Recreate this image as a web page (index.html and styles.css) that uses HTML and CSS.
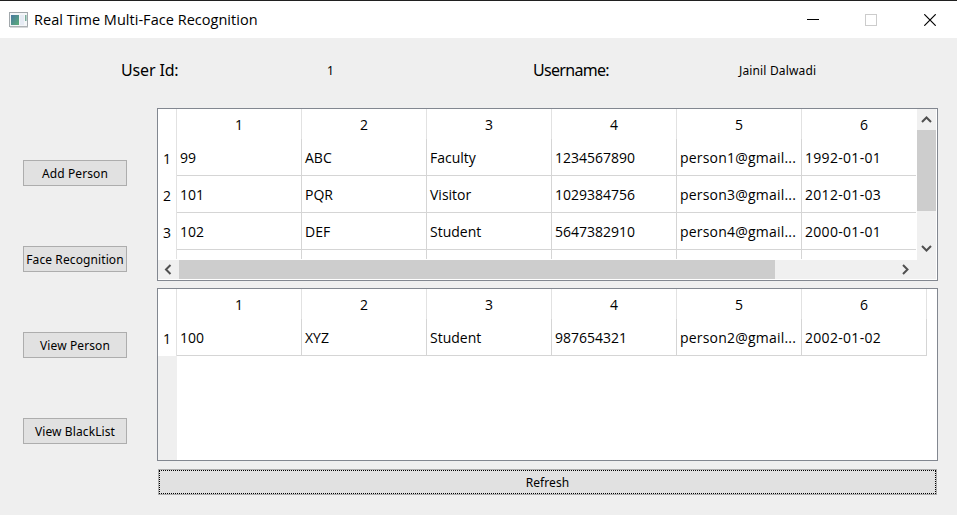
FILE: index.html
```html
<!DOCTYPE html>
<html lang="en">
<head>
<meta charset="utf-8">
<title>Real Time Multi-Face Recognition</title>
<link rel="stylesheet" href="styles.css">
</head>
<body>
<div class="window">
  <header class="titlebar">
    <svg class="app-icon" width="19" height="16" viewBox="0 0 19 16">
      <defs><linearGradient id="g" x1="0" y1="0" x2="1" y2="1"><stop offset="0" stop-color="#4878a0"/><stop offset="1" stop-color="#5cae78"/></linearGradient></defs>
      <rect x=".5" y=".5" width="18" height="14" fill="#f4f6f8" stroke="#a2a8ac"/>
      <rect x="1" y="14" width="18" height="1.5" fill="#aeb2b5"/>
      <rect x="2" y="3" width="8" height="10" fill="url(#g)"/>
      <rect x="11" y="3" width="4" height="10" fill="#e6ebf4"/>
      <rect x="16" y="3" width="1.5" height="6" fill="#79ad9b"/>
    </svg>
    <h1 class="title">Real Time Multi-Face Recognition</h1>
    <div class="controls">
      <svg width="12" height="12" viewBox="0 0 12 12"><path d="M0 5.5h12" stroke="#000"/></svg>
      <svg width="12" height="12" viewBox="0 0 12 12"><rect x=".5" y=".5" width="11" height="11" fill="none" stroke="#ccc"/></svg>
      <svg width="12" height="12" viewBox="0 0 12 12"><path d="M.3.3l11.4 11.4M11.7.3L.3 11.7" stroke="#000" stroke-width="1.2"/></svg>
    </div>
  </header>
  <div class="user">
    <span class="label id-label">User Id:</span>
    <span class="value id-value">1</span>
    <span class="label name-label">Username:</span>
    <span class="value name-value">Jainil Dalwadi</span>
  </div>
  <div class="body">
    <nav class="side">
      <button class="btn">Add Person</button>
      <button class="btn">Face Recognition</button>
      <button class="btn">View Person</button>
      <button class="btn">View BlackList</button>
    </nav>
    <main class="main">
      <section class="frame scrollable">
        <div class="view">
          <div class="grid">
            <div class="rh hd"></div><div class="hd">1</div><div class="hd">2</div><div class="hd">3</div><div class="hd">4</div><div class="hd">5</div><div class="hd">6</div>
            <div class="rh">1</div><div class="c">99</div><div class="c">ABC</div><div class="c">Faculty</div><div class="c">1234567890</div><div class="c mail">person1@gmail...</div><div class="c date">1992-01-01</div>
            <div class="rh">2</div><div class="c">101</div><div class="c">PQR</div><div class="c">Visitor</div><div class="c">1029384756</div><div class="c mail">person3@gmail...</div><div class="c date">2012-01-03</div>
            <div class="rh">3</div><div class="c">102</div><div class="c">DEF</div><div class="c">Student</div><div class="c">5647382910</div><div class="c mail">person4@gmail...</div><div class="c date">2000-01-01</div>
            <div class="rh"></div><div class="c"></div><div class="c"></div><div class="c"></div><div class="c"></div><div class="c"></div><div class="c"></div>
          </div>
        </div>
        <div class="vbar">
          <svg width="19" height="21" viewBox="0 0 19 21"><path d="M5 13l4.5-4.5L14 13" class="arrow"/></svg>
          <div class="vthumb"></div>
          <svg class="end" width="19" height="21" viewBox="0 0 19 21"><path d="M5 7l4.5 4.5L14 7" class="arrow"/></svg>
        </div>
        <div class="hbar">
          <svg width="21" height="19" viewBox="0 0 21 19"><path d="M12.5 5L8 9.5l4.5 4.5" class="arrow"/></svg>
          <div class="hthumb"></div>
          <svg class="end" width="21" height="19" viewBox="0 0 21 19"><path d="M8 5l4.5 4.5L8 14" class="arrow"/></svg>
        </div>
      </section>
      <section class="frame">
        <div class="grid">
          <div class="rh hd"></div><div class="hd">1</div><div class="hd">2</div><div class="hd">3</div><div class="hd">4</div><div class="hd">5</div><div class="hd">6</div>
          <div class="rh">1</div><div class="c">100</div><div class="c">XYZ</div><div class="c">Student</div><div class="c">987654321</div><div class="c mail">person2@gmail...</div><div class="c date">2002-01-02</div>
        </div>
        <div class="rest"></div>
      </section>
      <button class="btn refresh">Refresh</button>
    </main>
  </div>
</div>
</body>
</html>
```
FILE: styles.css
```css
* { box-sizing: border-box; }
body { margin: 0; background: #efefef; color: #000; }
.window { width: 957px; height: 515px; overflow: hidden; border-top: 1px solid #202020; font-family: "Noto Sans", sans-serif; }
.titlebar { height: 37px; background: #fff; display: flex; align-items: center; padding: 0 21px 0 9px; }
.title { margin: 0 0 0 6px; font: 400 14.5px/20px "Open Sans", sans-serif; letter-spacing: .03px; white-space: nowrap; }
.controls { margin-left: auto; display: flex; gap: 46px; }
.controls svg:last-child { margin-left: 1px; }
.controls svg, .app-icon { display: block; }

.user { height: 70px; display: flex; align-items: center; padding-bottom: 5px; white-space: nowrap; }
.label { font-size: 16px; padding-bottom: 2px; }
.value { font-size: 12px; letter-spacing: .15px; }
.id-label { width: 206px; margin-left: 121px; letter-spacing: -.15px; }
.id-value { width: 206px; }
.name-label { width: 206px; letter-spacing: -.7px; }

.body { display: flex; padding-left: 23px; }
.side { width: 104px; padding-top: 52px; display: flex; flex-direction: column; gap: 60px; }
.btn { display: block; height: 26px; padding: 1px 0 0; border: 1px solid #adadad; border-radius: 0; background: #e1e1e1; color: #000; font: 12px/22px "Noto Sans", sans-serif; letter-spacing: .1px; text-align: center; white-space: nowrap; }
.main { margin-left: 30px; width: 781px; display: flex; flex-direction: column; gap: 7px; }
.frame { height: 173px; border: 1px solid #828790; background: #fff; font: 14px/20px "Open Sans", sans-serif; }
.frame + .btn { margin: 1px 1px 0; }

.scrollable { display: grid; grid-template: 151px 19px / 759px 19px; }
.view { overflow: hidden; width: 758px; height: 150px; }
.grid { display: grid; width: 769px; grid-template-columns: 19px repeat(6, 125px); grid-template-rows: 30px; grid-auto-rows: 37px; }
.hd { border-right: 1px solid #e2e2e2; text-align: center; padding-top: 6px; }
.c { border-right: 1px solid #d5d5d5; border-bottom: 1px solid #d5d5d5; padding: 9px 0 0 3px; white-space: nowrap; overflow: hidden; }
.mail { letter-spacing: .2px; }
.date { letter-spacing: .3px; }
.rh { border-right: 1px solid #e2e2e2; text-align: center; padding-top: 10px; }
.rest { width: 19px; height: 104px; background: #efefef; }

.vbar { background: #f0f0f0; height: 151px; display: flex; flex-direction: column; }
.vthumb { height: 81px; background: #cdcdcd; }
.vbar .end { margin-top: auto; }
.hbar { grid-column: 1 / 3; width: 778px; background: #f0f0f0; display: flex; }
.hthumb { width: 596px; background: #cdcdcd; }
.hbar .end { margin-left: auto; margin-right: 20px; }
.arrow { fill: none; stroke: #505050; stroke-width: 2; }
.refresh { position: relative; }
.refresh::after { content: ""; position: absolute; inset: 0; border: 1px dotted #000; }
```
